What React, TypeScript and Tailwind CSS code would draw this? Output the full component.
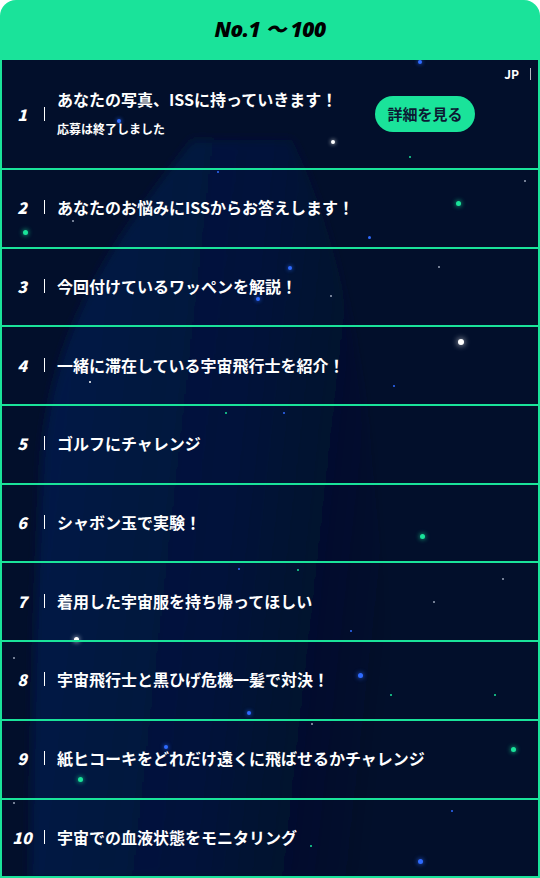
const items = [
  "あなたの写真、ISSに持っていきます！",
  "あなたのお悩みにISSからお答えします！",
  "今回付けているワッペンを解説！",
  "一緒に滞在している宇宙飛行士を紹介！",
  "ゴルフにチャレンジ",
  "シャボン玉で実験！",
  "着用した宇宙服を持ち帰ってほしい",
  "宇宙飛行士と黒ひげ危機一髪で対決！",
  "紙ヒコーキをどれだけ遠くに飛ばせるかチャレンジ",
  "宇宙での血液状態をモニタリング",
];

// [x, y, size, color] — y relative to list top (page y - 60)
const stars: [number, number, number, string][] = [
  [418, 2, 4, "#2f6bff"],
  [331, 82, 4, "#ffffff"],
  [408, 97, 2, "#1ae39a"],
  [117, 61, 4, "#2f6bff"],
  [456, 143, 5, "#1ae39a"],
  [23, 172, 5, "#1ae39a"],
  [71, 161, 2, "#9aa4b8"],
  [216, 112, 2, "#2f6bff"],
  [367, 177, 3, "#2f6bff"],
  [288, 208, 4, "#2f6bff"],
  [256, 239, 4, "#2f6bff"],
  [329, 236, 2, "#9aa4b8"],
  [437, 207, 2, "#9aa4b8"],
  [523, 121, 2, "#9aa4b8"],
  [459, 282, 6, "#ffffff"],
  [392, 326, 2, "#2f6bff"],
  [88, 322, 2, "#ffffff"],
  [19, 345, 2, "#9aa4b8"],
  [224, 353, 2, "#1ae39a"],
  [282, 353, 2, "#2f6bff"],
  [420, 476, 5, "#1ae39a"],
  [237, 509, 2, "#2f6bff"],
  [296, 510, 2, "#1ae39a"],
  [501, 519, 2, "#9aa4b8"],
  [432, 542, 2, "#9aa4b8"],
  [349, 571, 2, "#2f6bff"],
  [74, 579, 5, "#ffffff"],
  [12, 598, 2, "#9aa4b8"],
  [358, 615, 5, "#2f6bff"],
  [389, 635, 2, "#1ae39a"],
  [493, 635, 2, "#1ae39a"],
  [247, 653, 4, "#2f6bff"],
  [310, 664, 2, "#9aa4b8"],
  [164, 687, 4, "#2f6bff"],
  [511, 689, 5, "#1ae39a"],
  [78, 719, 5, "#1ae39a"],
  [12, 743, 2, "#9aa4b8"],
  [450, 751, 2, "#2f6bff"],
  [309, 786, 2, "#1ae39a"],
  [418, 801, 5, "#2f6bff"],
];

function Row({ n, title, first }: { n: number; title: string; first?: boolean }) {
  return (
    <div
      className={
        "flex items-center border-b-2 border-[#1ae39a] pl-[9px] " +
        (first ? "h-[110px]" : "h-[78.7px] pb-[2px]")
      }
    >
      <span className="w-[22px] text-center text-[16px] font-black italic text-white leading-none">{n}</span>
      <span className="ml-[11px] h-[14px] w-px bg-white" />
      <div className="ml-[12px] flex flex-1 items-center justify-between pr-[63px]">
        {first ? (
          <div className="flex flex-col pb-[4px]">
            <span className="text-[16px] font-bold text-white leading-[24px]">{title}</span>
            <span className="mt-[9px] text-[12px] font-bold text-white leading-[18px]">応募は終了しました</span>
          </div>
        ) : (
          <span className="text-[16px] font-bold text-white leading-[24px]">{title}</span>
        )}
        {first && (
          <button className="flex h-[36px] w-[100px] items-center justify-center rounded-full bg-[#1ae39a] text-[15px] font-bold text-[#0b1a33]">
            詳細を見る
          </button>
        )}
      </div>
    </div>
  );
}

export default function App() {
  return (
    <div
      className="h-[878px] w-[540px] overflow-hidden bg-white"
      style={{ fontFamily: '"Noto Sans CJK JP", "Noto Sans", sans-serif' }}
    >
      <div className="flex h-[60px] items-center justify-center rounded-t-[16px] bg-[#1ae39a]">
        <h1 className="text-[21px] font-black italic text-black tracking-tight" style={{ fontFamily: '"Noto Sans", "Noto Sans CJK JP", sans-serif' }}>
          No.1 ～ 100
        </h1>
      </div>
      <div className="relative h-[818px] overflow-hidden border-x-2 border-[#1ae39a] bg-[#020f2b]">
        {/* planet glow */}
        <svg className="absolute inset-0" width="536" height="818" viewBox="0 0 536 818">
          <defs>
            <linearGradient id="pl" x1="0" y1="0" x2="1" y2="0.2">
              <stop offset="0" stopColor="#031c52" stopOpacity="0.8" />
              <stop offset="0.6" stopColor="#021845" stopOpacity="0.55" />
              <stop offset="1" stopColor="#020f2b" stopOpacity="0" />
            </linearGradient>
            <filter id="bl"><feGaussianBlur stdDeviation="5" /></filter>
          </defs>
          <path
            d="M190 80 C 120 170, 50 260, 40 400 C 32 560, 30 700, 28 818 L 430 818 C 400 700, 385 560, 372 420 C 358 280, 330 160, 290 80 Z"
            fill="url(#pl)"
            filter="url(#bl)"
          />
        </svg>
        {stars.map(([x, y, s, c], i) => (
          <span
            key={i}
            className="absolute rounded-full"
            style={{
              left: x - s / 2,
              top: y - s / 2,
              width: s,
              height: s,
              background: c,
              boxShadow: s >= 4 ? `0 0 ${s}px ${c}` : undefined,
            }}
          />
        ))}
        <div className="absolute right-[7px] top-[8px] flex items-center gap-[11px]">
          <span className="text-[12px] font-bold text-white leading-none">JP</span>
          <span className="h-[12px] w-px bg-white/70" />
        </div>
        <div className="relative">
          {items.map((t, i) => (
            <Row key={i} n={i + 1} title={t} first={i === 0} />
          ))}
        </div>
      </div>
    </div>
  );
}
